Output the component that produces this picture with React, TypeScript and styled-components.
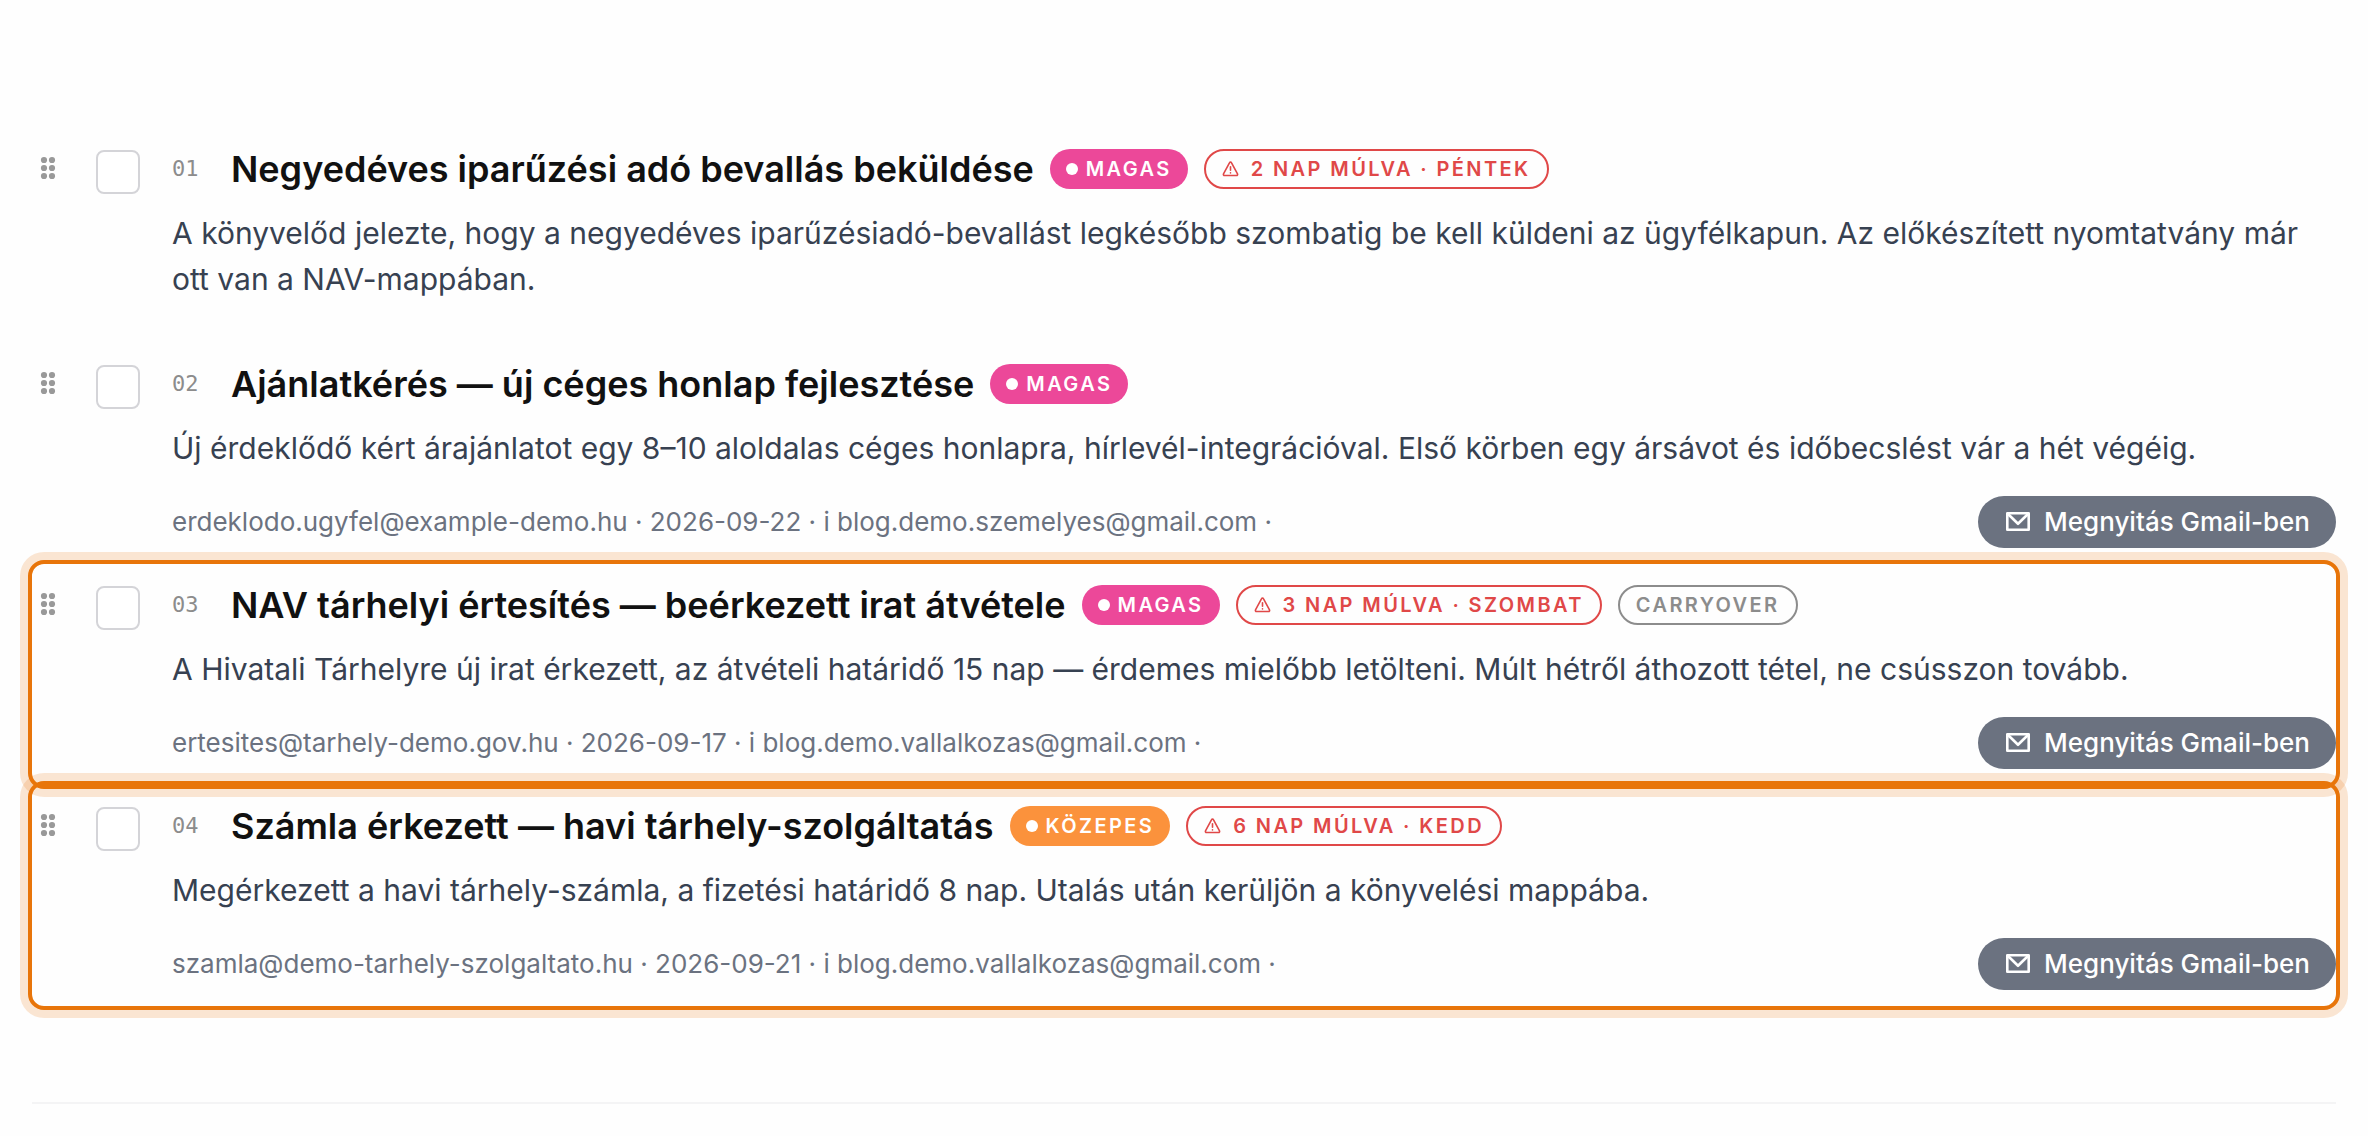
import React from "react";
import styled, { createGlobalStyle, css } from "styled-components";

type Priority = "high" | "medium";

interface Task {
  number: string;
  title: string;
  priority: Priority;
  due?: string;
  carryover?: boolean;
  summary: string;
  source?: string;
  highlighted?: boolean;
}

const tasks: Task[] = [
  {
    number: "01",
    title: "Negyedéves iparűzési adó bevallás beküldése",
    priority: "high",
    due: "2 nap múlva · péntek",
    summary:
      "A könyvelőd jelezte, hogy a negyedéves iparűzésiadó-bevallást legkésőbb szombatig be kell küldeni az ügyfélkapun. Az előkészített nyomtatvány már ott van a NAV-mappában.",
  },
  {
    number: "02",
    title: "Ajánlatkérés — új céges honlap fejlesztése",
    priority: "high",
    summary:
      "Új érdeklődő kért árajánlatot egy 8–10 aloldalas céges honlapra, hírlevél-integrációval. Első körben egy ársávot és időbecslést vár a hét végéig.",
    source: "erdeklodo.ugyfel@example-demo.hu · 2026-09-22 · i blog.demo.szemelyes@gmail.com ·",
  },
  {
    number: "03",
    title: "NAV tárhelyi értesítés — beérkezett irat átvétele",
    priority: "high",
    due: "3 nap múlva · szombat",
    carryover: true,
    summary:
      "A Hivatali Tárhelyre új irat érkezett, az átvételi határidő 15 nap — érdemes mielőbb letölteni. Múlt hétről áthozott tétel, ne csússzon tovább.",
    source: "ertesites@tarhely-demo.gov.hu · 2026-09-17 · i blog.demo.vallalkozas@gmail.com ·",
    highlighted: true,
  },
  {
    number: "04",
    title: "Számla érkezett — havi tárhely-szolgáltatás",
    priority: "medium",
    due: "6 nap múlva · kedd",
    summary:
      "Megérkezett a havi tárhely-számla, a fizetési határidő 8 nap. Utalás után kerüljön a könyvelési mappába.",
    source: "szamla@demo-tarhely-szolgaltato.hu · 2026-09-21 · i blog.demo.vallalkozas@gmail.com ·",
    highlighted: true,
  },
];

const priorityLabel: Record<Priority, string> = { high: "Magas", medium: "Közepes" };
const priorityColor: Record<Priority, string> = { high: "#ec4899", medium: "#fb923c" };

const GlobalStyle = createGlobalStyle`
  *, *::before, *::after { box-sizing: border-box; }
  body {
    margin: 0;
    background: #fefefe;
    color: #111;
    font-family: Inter, "Liberation Sans", sans-serif;
    -webkit-font-smoothing: antialiased;
  }
`;

const Page = styled.main`
  padding: 128px 32px 32px;
`;

const List = styled.ol`
  list-style: none;
  margin: 0;
  padding: 0 0 96px;
  border-bottom: 2px solid #f4f4f5;
`;

const Row = styled.li<{ $highlighted?: boolean }>`
  display: flex;
  align-items: flex-start;
  padding: 16px 0;
  border-radius: 12px;
  ${({ $highlighted }) =>
    $highlighted &&
    css`
      outline: 4px solid #e8750a;
      box-shadow: 0 0 0 12px rgba(232, 117, 10, 0.18);
    `}
`;

const DragHandle = styled.button`
  display: flex;
  margin: 12px 40px 0 8px;
  padding: 0;
  border: 0;
  background: none;
  color: #999;
  cursor: grab;
`;

const Checkbox = styled.input`
  appearance: none;
  flex: none;
  width: 44px;
  height: 44px;
  margin: 6px 32px 0 0;
  border: 2px solid #d4d4d8;
  border-radius: 8px;
  background: #fff;
  &:checked {
    background: #6b7280;
  }
`;

const Body = styled.div`
  flex: 1;
  min-width: 0;
`;

const Heading = styled.div`
  display: flex;
  flex-wrap: wrap;
  align-items: center;
  column-gap: 16px;
  min-height: 50px;
  margin-bottom: 16px;
`;

const Number = styled.span`
  width: 43px;
  color: #8c8c8c;
  font-family: "DejaVu Sans Mono", monospace;
  font-size: 22px;
  line-height: 26px;
`;

const Title = styled.label`
  font-size: 36px;
  font-weight: 600;
  line-height: 50px;
`;

const Chip = styled.span`
  display: inline-flex;
  align-items: center;
  height: 40px;
  border-radius: 20px;
  font-size: 20px;
  font-weight: 600;
  line-height: 24px;
  letter-spacing: 0.12em;
  text-transform: uppercase;
  white-space: nowrap;
`;

const PriorityChip = styled(Chip)<{ $color: string }>`
  gap: 8px;
  padding: 0 16px;
  background: ${({ $color }) => $color};
  color: #fff;
`;

const OutlineChip = styled(Chip)<{ $color: string }>`
  gap: 12px;
  padding: 0 16px;
  border: 2px solid ${({ $color }) => $color};
  color: ${({ $color }) => $color};
`;

const Dot = styled.span`
  width: 12px;
  height: 12px;
  border-radius: 50%;
  background: #fff;
`;

const Summary = styled.p`
  margin: 0 0 25px;
  color: #374151;
  font-size: 30px;
  line-height: 46px;
`;

const Footer = styled.div`
  display: flex;
  flex-wrap: wrap;
  align-items: center;
  justify-content: space-between;
  gap: 16px;
`;

const Source = styled.span`
  color: #6b7280;
  font-size: 26px;
  line-height: 32px;
`;

const GmailLink = styled.a`
  display: inline-flex;
  align-items: center;
  gap: 14px;
  height: 52px;
  padding: 0 26px;
  border-radius: 26px;
  background: #6b7280;
  color: #fff;
  font-size: 26px;
  font-weight: 500;
  line-height: 32px;
  text-decoration: none;
`;

function TaskRow({ task }: { task: Task }) {
  const id = `task-${task.number}`;
  return (
    <Row $highlighted={task.highlighted}>
      <DragHandle type="button" aria-label="Áthelyezés">
        <svg width="16" height="24" viewBox="0 0 16 24" fill="currentColor" aria-hidden="true">
          {[4, 12, 20].map((y) => (
            <React.Fragment key={y}>
              <circle cx="4" cy={y} r="3.1" />
              <circle cx="12" cy={y} r="3.1" />
            </React.Fragment>
          ))}
        </svg>
      </DragHandle>
      <Checkbox type="checkbox" id={id} />
      <Body>
        <Heading>
          <Number>{task.number}</Number>
          <Title htmlFor={id}>{task.title}</Title>
          <PriorityChip $color={priorityColor[task.priority]}>
            <Dot />
            {priorityLabel[task.priority]}
          </PriorityChip>
          {task.due && (
            <OutlineChip $color="#e04848">
              <svg width="17" height="16" viewBox="0 0 16 16" fill="none" stroke="currentColor" strokeWidth="1.6" strokeLinejoin="round" strokeLinecap="round" aria-hidden="true">
                <path d="M7.1 1.7 1 12.9a1.1 1.1 0 0 0 1 1.6h12a1.1 1.1 0 0 0 1-1.6L8.9 1.7a1 1 0 0 0-1.8 0Z" />
                <path d="M8 5.8v3.4M8 11.8v.1" />
              </svg>
              {task.due}
            </OutlineChip>
          )}
          {task.carryover && <OutlineChip $color="#8c8c8c">Carryover</OutlineChip>}
        </Heading>
        <Summary>{task.summary}</Summary>
        {task.source && (
          <Footer>
            <Source>{task.source}</Source>
            <GmailLink href="#gmail">
              <svg width="26" height="20" viewBox="-2 0 26 20" fill="none" stroke="currentColor" strokeWidth="2.6" strokeLinejoin="round" aria-hidden="true">
                <path d="M1.3 1.3h21.4v16.4H1.3Z" />
                <path d="m2 2 10 9.8L22 2" />
              </svg>
              Megnyitás Gmail-ben
            </GmailLink>
          </Footer>
        )}
      </Body>
    </Row>
  );
}

export default function App() {
  return (
    <>
      <GlobalStyle />
      <Page>
        <List>
          {tasks.map((task) => (
            <TaskRow key={task.number} task={task} />
          ))}
        </List>
      </Page>
    </>
  );
}
